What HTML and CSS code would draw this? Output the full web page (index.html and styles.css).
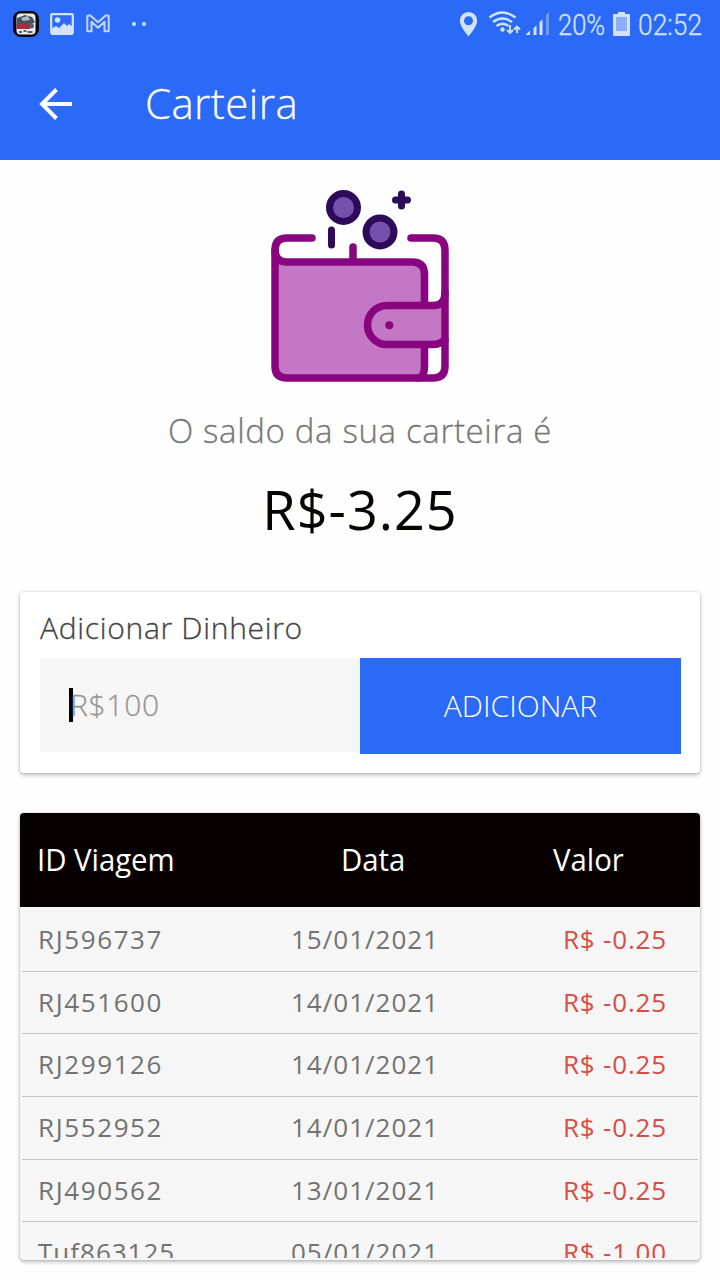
FILE: index.html
```html
<!DOCTYPE html>
<html lang="pt-BR">
<head>
<meta charset="utf-8">
<title>Carteira</title>
<link rel="stylesheet" href="styles.css">
</head>
<body>
<header class="top">
  <div class="status">
    <svg class="notifications" width="160" height="48" viewBox="0 0 160 48">
      <rect x="13" y="11" width="26" height="26" rx="8" fill="#080a10"/>
      <rect x="16.500" y="13.500" width="19" height="21" rx="4" fill="#e9edf0"/>
      <path d="M17 18l8-3 7 2 3 5-3 2H17z" fill="#44535c"/>
      <path d="M21 18l7-2 2 4-7 1z" fill="#aebdc3"/>
      <path d="M16.500 24H30v5H16.500z" fill="#a52d3d"/>
      <circle cx="31.500" cy="26" r="2.500" fill="#586168"/>
      <path d="M19 32h3m1.500-1h3m1 1h5" stroke="#303238" stroke-width="1.500"/>
      <rect x="51.200" y="14.200" width="21.600" height="19.600" rx="1" fill="none" stroke="#d3e2ff" stroke-width="2.200"/>
      <circle cx="57.500" cy="20" r="2.800" fill="#d3e2ff"/>
      <path d="M51 29l5-3 3 2 5-5 3 3 2-2 4 3v6H51z" fill="#d3e2ff"/>
      <path d="M87.300 16l2.700-.8 8 7 8-7 2.700.8v15.300h-4.200v-9.500l-6.500 6-6.500-6v9.500h-4.200z" fill="none" stroke="#c3d6ff" stroke-width="2" stroke-linejoin="round"/>
      <circle cx="134" cy="24" r="2" fill="#d3e2ff"/><circle cx="144" cy="24" r="2" fill="#d3e2ff"/>
    </svg>
    <div class="system">
      <svg width="92" height="48" viewBox="458 0 92 48">
        <path fill-rule="evenodd" d="M468.500 12a8.700 8.700 0 0 0-8.700 8.700c0 5.800 8.700 15.600 8.700 15.600s8.700-9.800 8.700-15.600a8.700 8.700 0 0 0-8.700-8.700zm0 4.200a4.500 4.500 0 1 1 0 9 4.500 4.500 0 0 1 0-9z" fill="#d3e2ff"/>
        <g fill="none" stroke="#d3e2ff" stroke-width="2.300">
          <path d="M489.500 17.500q13-10 26 0M493 22q9.500-7 19 0M496.500 26q6-4.500 12 0"/>
          <path d="M510 25v8m-3-3l3 3 3-3M517 33v-6m-3 2.500l3-3 3 3" stroke-width="1.900"/>
        </g>
        <circle cx="502.500" cy="29.500" r="2.200" fill="#d3e2ff"/>
        <path d="M525.500 35l4.500-4.500V35zM533.500 28l3-2.500V35h-3zM539.500 22l3-2.500V35h-3z" fill="#d3e2ff"/>
        <path d="M546 15l3-3v23h-3z" fill="#7299fa"/>
      </svg>
      <span class="pct"><span class="narrow">20%</span></span>
      <svg class="battery" width="17" height="48" viewBox="613 0 17 48">
        <path d="M618 12h7v2h4a1 1 0 0 1 1 1v20a1 1 0 0 1-1 1h-15a1 1 0 0 1-1-1V15a1 1 0 0 1 1-1h4z" fill="#d3e2ff"/>
        <path d="M616 17h11v14h-11z" fill="#8eaef9"/>
      </svg>
      <span class="clock"><span class="narrow">02:52</span></span>
    </div>
  </div>
  <div class="appbar">
    <svg width="34" height="34" viewBox="0 0 34 34"><path d="M33 17H4M17.500 2.500L3 17l14.500 14.500" fill="none" stroke="#fff" stroke-width="4"/></svg>
    <h1 class="title">Carteira</h1>
  </div>
</header>
<main class="main">
  <section class="balance">
    <svg class="wallet" width="180" height="194" viewBox="270 189 180 194">
      <path d="M275 258q2 4 9 4h128q13 0 13 13v103H285q-10 0-10-10z" fill="#c477c4"/>
      <path d="M445 306H386a19.500 19.500 0 0 0 0 39h50q9-1 9-9z" fill="#c477c4"/>
      <g fill="none" stroke="#89057f" stroke-width="7.500" stroke-linecap="round">
        <path d="M312 238H287q-12 0-12 12v116q0 12 12 12h146q12 0 12-12V250q0-12-12-12h-22"/>
        <path d="M275 250q0 12 12 12h125q12.500 0 12.500 12.500V303M424.500 347v18q0 12-6 13M353 247v14"/>
        <path d="M445 293q0 12.500-12 12.500H387a19.500 19.500 0 0 0 0 39h46q7 0 12-5"/>
      </g>
      <circle cx="389.300" cy="325.300" r="4" fill="#89057f"/>
      <g fill="#7650ad" stroke="#2d0b5a" stroke-width="7"><circle cx="343.500" cy="207.500" r="14"/><circle cx="380" cy="232" r="14"/></g>
      <path d="M331.500 230v15M401.500 194v12m-6-6h12" stroke="#2d0b5a" stroke-width="7" stroke-linecap="round"/>
    </svg>
    <p class="caption">O saldo da sua carteira é</p>
    <p class="amount">R$-3.25</p>
  </section>
  <section class="card add">
    <h2 class="label">Adicionar Dinheiro</h2>
    <div class="form">
      <div class="field"><span class="caret"></span><span class="placeholder">R$100</span></div>
      <button class="button">ADICIONAR</button>
    </div>
  </section>
  <section class="card history">
    <div class="head"><span class="heading">ID Viagem</span><span class="heading">Data</span><span class="heading">Valor</span></div>
    <div class="rows">
      <div class="row"><span class="trip">RJ596737</span><span>15/01/2021</span><span class="value">R$ -0.25</span></div>
      <div class="row"><span class="trip">RJ451600</span><span>14/01/2021</span><span class="value">R$ -0.25</span></div>
      <div class="row"><span class="trip">RJ299126</span><span>14/01/2021</span><span class="value">R$ -0.25</span></div>
      <div class="row"><span class="trip">RJ552952</span><span>14/01/2021</span><span class="value">R$ -0.25</span></div>
      <div class="row"><span class="trip">RJ490562</span><span>13/01/2021</span><span class="value">R$ -0.25</span></div>
      <div class="row"><span>Tuf863125</span><span>05/01/2021</span><span class="value">R$ -1.00</span></div>
    </div>
  </section>
</main>
</body>
</html>
```
FILE: styles.css
```css
* { box-sizing: border-box; }
body { margin: 0; width: 720px; height: 1280px; overflow: hidden; background: #fefefe; font-family: "Open Sans", "Noto Sans", sans-serif; }
h1, h2, p { margin: 0; font-weight: 300; }
svg { display: block; flex: none; }
span { white-space: nowrap; }
.top { height: 160px; background: #2a6af6; }
.status { display: flex; justify-content: space-between; height: 48px; }
.system { display: flex; width: 262px; color: #d3e2ff; font: 300 30px/50px Roboto, sans-serif; }
.pct { flex: none; width: 63px; padding-left: 8px; }
.clock { flex: none; width: 90px; padding-left: 8px; }
.narrow { display: inline-block; transform: scaleX(.88); transform-origin: left; -webkit-text-stroke: .3px #d3e2ff; }
.pct .narrow { transform: scaleX(.85); }
.appbar { display: flex; align-items: center; height: 112px; padding-left: 39px; }
.title { margin-left: 72px; color: #fff; font-size: 42px; letter-spacing: .4px; line-height: 58px; padding-bottom: 2px; -webkit-text-stroke: .3px #fff; }
.main { padding: 29px 20px 0; }
.balance { display: flex; flex-direction: column; align-items: center; height: 403px; }
.caption { margin-top: 24px; line-height: 48px; font-size: 33px; letter-spacing: .65px; color: #777; -webkit-text-stroke: .3px #777; }
.amount { margin-top: 14px; line-height: 80px; font-size: 54px; font-weight: 400; letter-spacing: 1px; color: #080402; }
.card { border-radius: 4px; background: #fff; box-shadow: 0 0 2px rgba(0,0,0,.22), 0 2px 4px rgba(0,0,0,.26); }
.add { height: 181px; padding: 16px 19px 19px 20px; }
.label { height: 50px; font-size: 30px; line-height: 40px; letter-spacing: .7px; color: #444; -webkit-text-stroke: .3px #444; }
.form { display: flex; height: 96px; }
.field { display: flex; align-items: center; width: 320px; height: 94px; padding-left: 29px; background: #f6f6f6; }
.caret { width: 4px; height: 34px; margin-right: -3px; background: #050202; }
.placeholder { padding-bottom: 2px; font-size: 30px; font-weight: 300; letter-spacing: .7px; color: #969696; -webkit-text-stroke: .3px #969696; }
.button { flex: 1; padding: 0; border: 0; background: #2a6af6; color: #fff; font: 300 30px/94px "Open Sans", sans-serif; }
.history { height: 447px; margin-top: 40px; overflow: hidden; background: #f6f6f6; }
.head { display: grid; grid-template-columns: 304px 212px 1fr; height: 94px; padding-left: 17px; background: #060100; color: #fff; font-size: 31px; line-height: 92px; }
.heading { transform: scaleX(.945); transform-origin: left; }
.rows { height: 351px; margin: 0 2px; overflow: hidden; }
.row { display: grid; grid-template-columns: 253px 272px 1fr; height: 62.7px; padding-left: 16px; border-bottom: 1.5px solid #c2c2c2; color: #727272; font-size: 26px; line-height: 60px; letter-spacing: 1px; }
.row:first-child { height: 64.5px; line-height: 64px; }
.trip { letter-spacing: 1.6px; }
.value { color: #db4b43; letter-spacing: .8px; }
```
